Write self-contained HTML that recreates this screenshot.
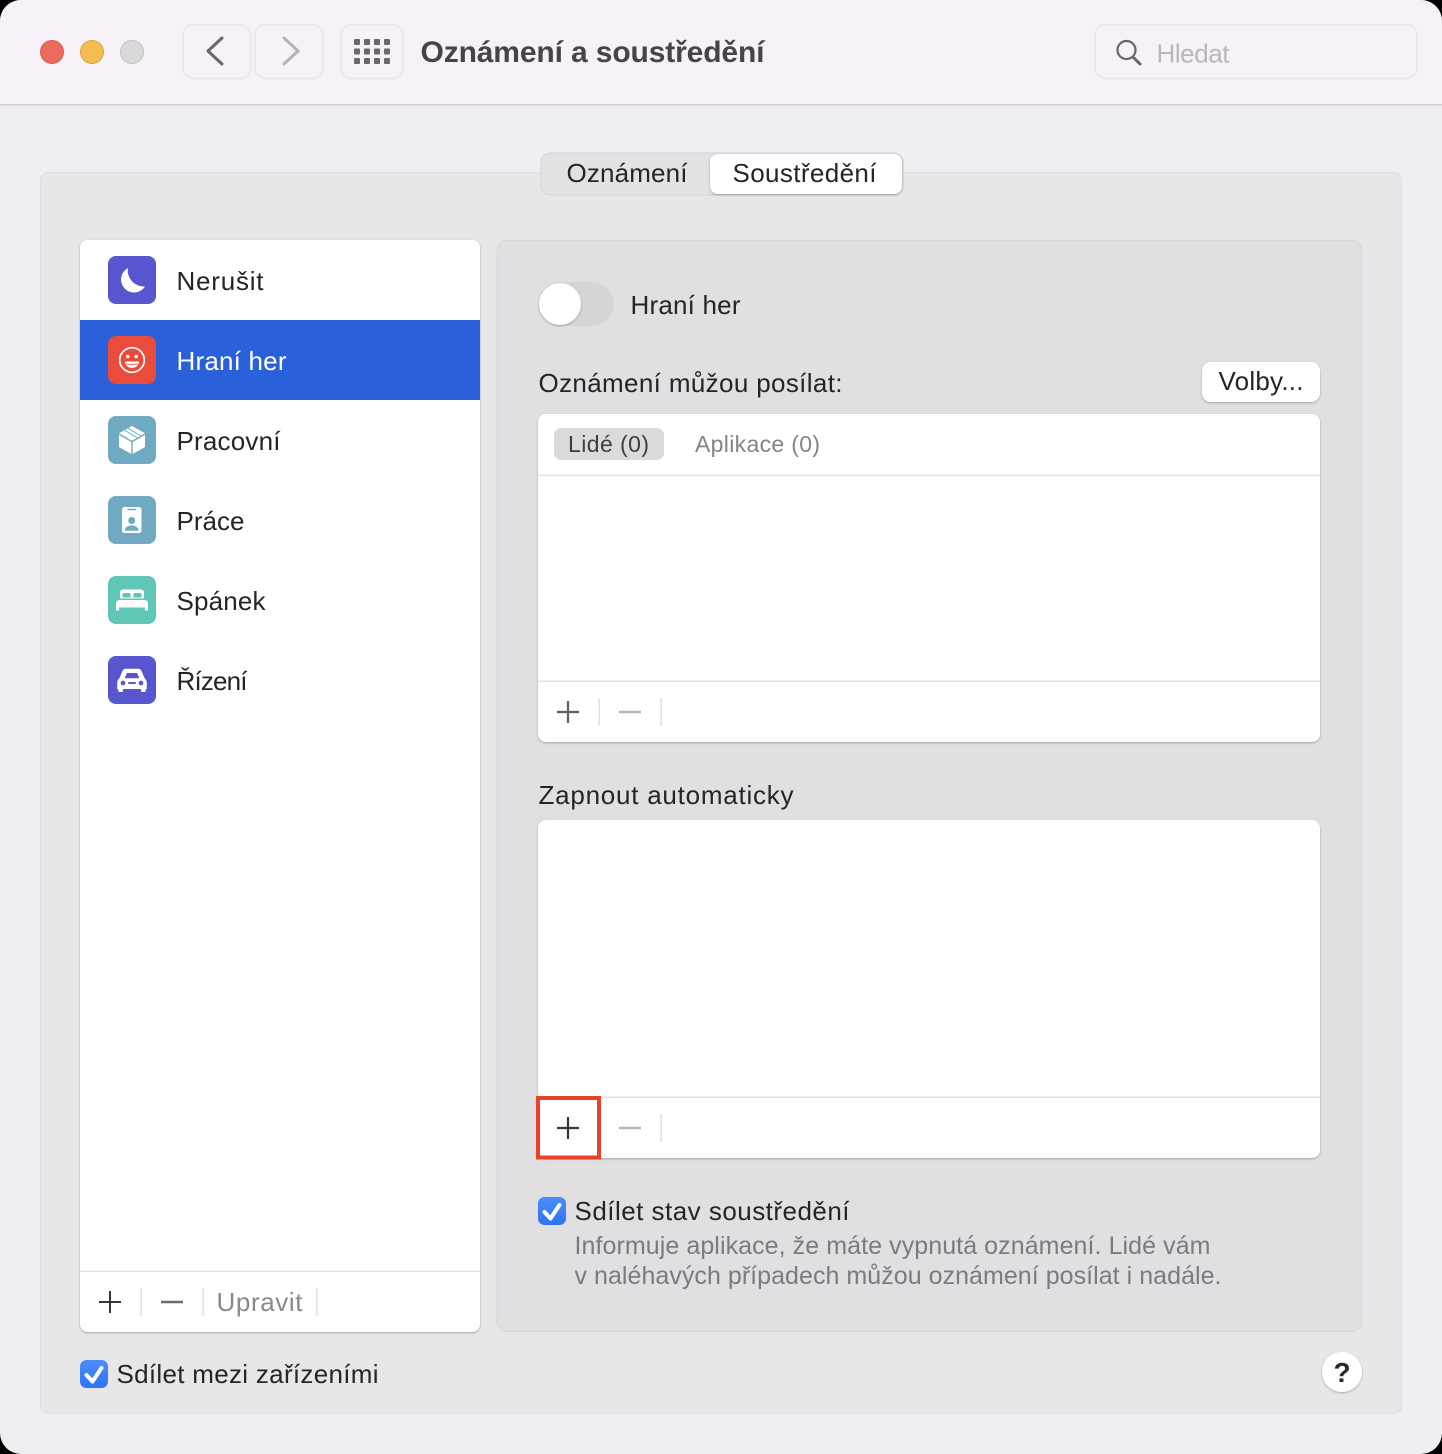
<!DOCTYPE html>
<html lang="cs"><head><meta charset="utf-8"><title>Oznámení a soustředění</title>
<style>
html,body{margin:0;padding:0;background:#000;width:1442px;height:1454px;overflow:hidden}
svg{display:block}
text{font-family:"Liberation Sans",sans-serif;font-size:26px;fill:#252427}
.g{fill:#7c7a7e;font-size:25px}
</style></head><body>
<svg width="1442" height="1454" viewBox="0 0 1442 1454" xmlns="http://www.w3.org/2000/svg">
<defs>
<filter id="s" x="-20%" y="-30%" width="140%" height="170%"><feDropShadow dx="0" dy="1" stdDeviation="1" flood-color="#000" flood-opacity=".28"/></filter>
<linearGradient id="cb" x1="0" y1="0" x2="0" y2="1"><stop offset="0" stop-color="#4b8dfa"/><stop offset="1" stop-color="#2f74f2"/></linearGradient>
</defs>
<rect width="1442" height="1454" fill="#000"/>
<rect width="1442" height="1454" rx="21" fill="#f0eef2"/>
<path d="M0 104V21A21 21 0 0 1 21 0H1421A21 21 0 0 1 1442 21V104Z" fill="#f6f2f8"/>
<rect y="104" width="1442" height="1.5" fill="#cfcdd1"/>

<circle cx="52" cy="52" r="11.5" fill="#ee6a5f" stroke="#d5584e"/>
<circle cx="92" cy="52" r="11.5" fill="#f5bd4f" stroke="#d9a441"/>
<circle cx="132" cy="52" r="11.5" fill="#dcd9dd" stroke="#c6c3c7"/>

<g fill="none" stroke="#ebe8ee" stroke-width="2">
<rect x="183" y="25" width="67.500" height="53.500" rx="10"/>
<rect x="255" y="25" width="68" height="53.500" rx="10"/>
<rect x="341" y="25" width="62" height="53.500" rx="10"/>
<rect x="1095" y="25" width="322" height="53.500" rx="10"/>
</g>
<path d="M222 38L208 51L222 64" fill="none" stroke="#69676b" stroke-width="3" stroke-linecap="round" stroke-linejoin="round"/>
<path d="M284 38L298 51L284 64" fill="none" stroke="#b5b3b7" stroke-width="3" stroke-linecap="round" stroke-linejoin="round"/>
<g fill="#69676b">
<rect x="354" y="39" width="6" height="6" rx="1"/><rect x="364" y="39" width="6" height="6" rx="1"/><rect x="374" y="39" width="6" height="6" rx="1"/><rect x="384" y="39" width="6" height="6" rx="1"/>
<rect x="354" y="48.500" width="6" height="6" rx="1"/><rect x="364" y="48.500" width="6" height="6" rx="1"/><rect x="374" y="48.500" width="6" height="6" rx="1"/><rect x="384" y="48.500" width="6" height="6" rx="1"/>
<rect x="354" y="58" width="6" height="6" rx="1"/><rect x="364" y="58" width="6" height="6" rx="1"/><rect x="374" y="58" width="6" height="6" rx="1"/><rect x="384" y="58" width="6" height="6" rx="1"/>
</g>
<text x="420.500" y="62" textLength="344" style="font-size:30px;font-weight:bold;fill:#464448">Oznámení a soustředění</text>
<circle cx="1126.500" cy="50" r="9" fill="none" stroke="#69676b" stroke-width="2.200"/>
<path d="M1133 57L1140 64" stroke="#69676b" stroke-width="3" stroke-linecap="round"/>
<text x="1156.500" y="62.500" textLength="73" style="fill:#bab7bc">Hledat</text>

<rect x="40.500" y="172.500" width="1361" height="1241" rx="8" fill="#e8e6e9" stroke="#dfdde0"/>

<rect x="541" y="153" width="362" height="42" rx="9" fill="#e3e1e4" stroke="#d3d1d4"/>
<rect x="710" y="154" width="192" height="40" rx="8" fill="#fff" filter="url(#s)"/>
<text x="566.500" y="182" textLength="121">Oznámení</text>
<text x="732.500" y="182" textLength="144">Soustředění</text>

<rect x="80" y="240" width="400" height="1092" rx="8" fill="#fff" filter="url(#s)"/>
<rect x="80" y="320" width="400" height="80" fill="#2a60da"/>
<rect x="80" y="1270.500" width="400" height="1.500" fill="#e3e2e4"/>

<rect x="108" y="256" width="48" height="48" rx="8" fill="#5856cf"/>
<path d="M128 268A13 13 0 1 0 145 286.500A16 16 0 0 1 128 268Z" fill="#fff"/>
<text x="176.500" y="290" textLength="87">Nerušit</text>

<rect x="108" y="336" width="48" height="48" rx="8" fill="#ea4c3b"/>
<circle cx="132" cy="360" r="12.300" fill="none" stroke="#fff" stroke-width="1.700"/>
<circle cx="127.800" cy="356.500" r="1.800" fill="#fff"/><circle cx="136.200" cy="356.500" r="1.800" fill="#fff"/>
<path d="M125 361.500H139C139 370 125 370 125 361.500Z" fill="#fff"/>
<path d="M126 364.300H138" stroke="#ea4c3b" stroke-width=".8"/>
<text x="176.500" y="370" textLength="110" style="fill:#fff">Hraní her</text>

<rect x="108" y="416" width="48" height="48" rx="8" fill="#70a9c2"/>
<path d="M119 435L131.300 442V454L119 447ZM132.700 442L145 435V447L132.700 454ZM132 426L145 433.300L132 440.700L119 433.300Z" fill="#fff"/>
<path d="M124.500 430.200L137 437.600M128 428.300L140.500 435.600" stroke="#70a9c2" stroke-width="1"/>
<text x="176.500" y="450" textLength="104">Pracovní</text>

<rect x="108" y="496" width="48" height="48" rx="8" fill="#70a9c2"/>
<rect x="122" y="507" width="19.500" height="26" rx="2.500" fill="#fff"/>
<rect x="127.500" y="508.800" width="8.500" height="1.500" fill="#70a9c2"/>
<circle cx="131.700" cy="520.500" r="3.500" fill="#70a9c2"/>
<path d="M125 530.800C125 523.500 138.500 523.500 138.500 530.800Z" fill="#70a9c2"/>
<text x="176.500" y="530" textLength="68">Práce</text>

<rect x="108" y="576" width="48" height="48" rx="8" fill="#5fc6b8"/>
<path d="M120 598.500V592.500A3 3 0 0 1 123 589.500H141A3 3 0 0 1 144 592.500V598.500ZM122.500 597.500H130.500V594.500A1.500 1.500 0 0 0 129 593H124A1.500 1.500 0 0 0 122.500 594.500ZM133.500 597.500H141.500V594.500A1.500 1.500 0 0 0 140 593H135A1.500 1.500 0 0 0 133.500 594.500Z" fill="#fff" fill-rule="evenodd"/>
<path d="M116 603A3 3 0 0 1 119 600H145A3 3 0 0 1 148 603V610.500H145V607.500H119V610.500H116Z" fill="#fff"/>
<text x="176.500" y="610" textLength="89">Spánek</text>

<rect x="108" y="656" width="48" height="48" rx="8" fill="#5856cf"/>
<path d="M122.500 671A3.500 3.500 0 0 1 125.500 668.800H138.500A3.500 3.500 0 0 1 141.500 671L144.500 678C146 679.500 146.800 681 146.800 683V689H145.800V690.500A1.500 1.500 0 0 1 144.300 692H142.500A1.500 1.500 0 0 1 141 690.500V689H123V690.500A1.500 1.500 0 0 1 121.500 692H119.700A1.500 1.500 0 0 1 118.200 690.500V689H117.200V683C117.200 681 118 679.500 119.500 678ZM124.500 678.300H139.500L137 673H127Z" fill="#fff" fill-rule="evenodd"/>
<circle cx="123" cy="683" r="2.300" fill="#5856cf"/><circle cx="141" cy="683" r="2.300" fill="#5856cf"/>
<rect x="128" y="682" width="8" height="2" rx="1" fill="#5856cf"/>
<text x="176.500" y="690" textLength="71">Řízení</text>

<path d="M99 1302H121M110 1291V1313" stroke="#37363a" stroke-width="2"/>
<path d="M161 1302H183" stroke="#6d6b6e" stroke-width="2.500"/>
<g fill="#e0dfe1"><rect x="140.500" y="1288" width="1.500" height="28"/><rect x="202.500" y="1288" width="1.500" height="28"/><rect x="316" y="1288" width="1.500" height="28"/></g>
<text x="216.500" y="1311" textLength="86" style="fill:#8a888c">Upravit</text>

<rect x="497" y="240.500" width="865" height="1091" rx="10" fill="#e1dfe2" stroke="#d9d7da"/>

<rect x="538" y="282" width="76" height="44" rx="22" fill="#d6d4d7"/>
<circle cx="560" cy="304" r="21" fill="#fff" filter="url(#s)"/>
<text x="630.500" y="314" textLength="110">Hraní her</text>

<text x="538.500" y="392" textLength="304">Oznámení můžou posílat:</text>
<rect x="1202" y="362" width="118" height="40" rx="9" fill="#fff" filter="url(#s)"/>
<text x="1218.500" y="390" textLength="85">Volby...</text>

<rect x="538" y="414" width="782" height="328" rx="8" fill="#fff" filter="url(#s)"/>
<rect x="538" y="474.500" width="782" height="1.500" fill="#e3e2e4"/>
<rect x="538" y="680.500" width="782" height="1.500" fill="#e3e2e4"/>
<rect x="554" y="428" width="110" height="32" rx="7" fill="#dcdbdc"/>
<text x="568" y="452" textLength="81" style="font-size:23px;fill:#3f3e41">Lidé (0)</text>
<text x="695" y="452" textLength="125" style="font-size:23px;fill:#858386">Aplikace (0)</text>
<path d="M557 712H579M568 701V723" stroke="#605e62" stroke-width="2.200"/>
<path d="M619 712H641" stroke="#b8b6ba" stroke-width="2.500"/>
<g fill="#e0dfe1"><rect x="598.500" y="698" width="1.500" height="28"/><rect x="660.500" y="698" width="1.500" height="28"/></g>

<text x="538.500" y="804" textLength="255">Zapnout automaticky</text>
<rect x="538" y="820" width="782" height="338" rx="8" fill="#fff" filter="url(#s)"/>
<rect x="538" y="1096.500" width="782" height="1.500" fill="#e3e2e4"/>
<path d="M557 1128H579M568 1117V1139" stroke="#37363a" stroke-width="2.200"/>
<path d="M619 1128H641" stroke="#b8b6ba" stroke-width="2.500"/>
<rect x="660.500" y="1114" width="1.500" height="28" fill="#e0dfe1"/>
<rect x="538" y="1098" width="61" height="59.500" fill="none" stroke="#e8422c" stroke-width="4"/>

<rect x="538" y="1197" width="28" height="28" rx="6.500" fill="url(#cb)"/>
<path d="M544.500 1212L550.500 1218.500L559.500 1205" fill="none" stroke="#fff" stroke-width="4" stroke-linecap="round" stroke-linejoin="round"/>
<text x="574.500" y="1220" textLength="275">Sdílet stav soustředění</text>
<text x="574.500" y="1254" textLength="636" class="g">Informuje aplikace, že máte vypnutá oznámení. Lidé vám</text>
<text x="574.500" y="1284" textLength="647" class="g">v naléhavých případech můžou oznámení posílat i nadále.</text>

<rect x="80" y="1360" width="28" height="28" rx="6.500" fill="url(#cb)"/>
<path d="M86.500 1375L92.500 1381.500L101.500 1368" fill="none" stroke="#fff" stroke-width="4" stroke-linecap="round" stroke-linejoin="round"/>
<text x="116.500" y="1383" textLength="262">Sdílet mezi zařízeními</text>

<circle cx="1342" cy="1372" r="20" fill="#fff" filter="url(#s)"/>
<text x="1342" y="1382" text-anchor="middle" style="font-size:28px;font-weight:bold;fill:#2b2a2d">?</text>
</svg>
</body></html>
